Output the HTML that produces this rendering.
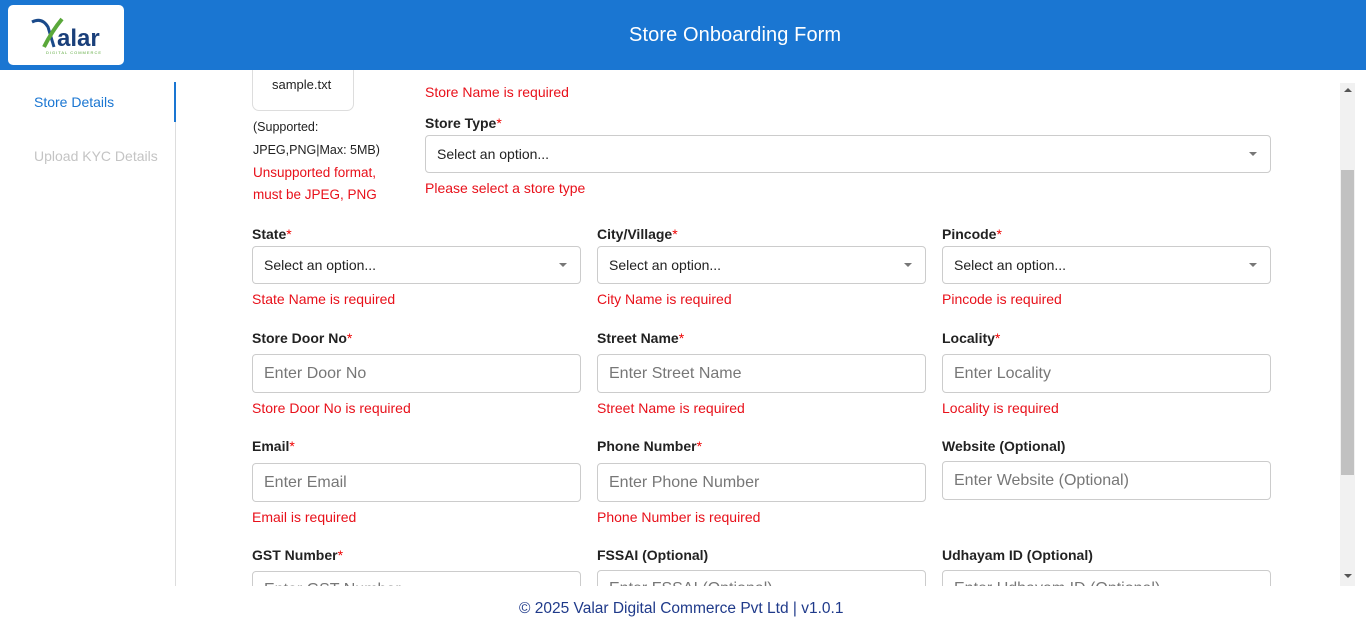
<!DOCTYPE html><html><head><style>
*{box-sizing:border-box;margin:0;padding:0}
body{width:1366px;height:633px;overflow:hidden;background:#fff;font-family:"Liberation Sans",Arial,sans-serif;position:relative}
.hdr{position:absolute;left:0;top:0;width:1366px;height:70px;background:#1a76d2}
.logo{position:absolute;left:8px;top:5px;width:116px;height:60px;background:#fff;border-radius:5px}
.title{position:absolute;left:629px;top:24px;color:#fff;font-size:20px;letter-spacing:0.1px}
.a{position:absolute;white-space:nowrap}
.lab{font-size:14px;font-weight:bold;color:#222}
.lab i{color:#e00;font-style:normal;font-weight:normal}
.err{font-size:14px;color:#e8101a}
.box{position:absolute;border:1px solid #ccc;border-radius:4px;background:#fff;font-size:16px;color:#777;padding-left:11px;display:flex;align-items:center}
.sel{font-size:14px;color:#222}
.sel:after{content:"";position:absolute;right:13px;top:50%;margin-top:-2px;border:4px solid transparent;border-top:4px solid #777}
.clip{position:absolute;left:0;top:70px;width:1340px;height:516px;overflow:hidden}
</style></head><body>
<div class="hdr"><div class="logo">
<svg width="116" height="60" viewBox="0 0 116 60"><path d="M24 17 Q34 12 40 22 L46 42" stroke="#1a4a8a" stroke-width="3" fill="none"/><path d="M36 42 Q44 26 54 14" stroke="#5aa83a" stroke-width="4" fill="none"/><text x="49" y="41" font-family="Liberation Sans" font-weight="bold" font-size="24" fill="#1a3f7a">alar</text><text x="38" y="49" font-family="Liberation Sans" font-size="4" fill="#5aa83a" letter-spacing="1">DIGITAL COMMERCE</text></svg>
</div><div class="title">Store Onboarding Form</div></div>
<div class="clip">
<div class="a" style="left:34px;top:24px;font-size:14px;color:#1a76d2">Store Details</div>
<div class="a" style="left:34px;top:78px;font-size:14px;color:#c4c4c4">Upload KYC Details</div>
<div class="a" style="left:175px;top:12px;width:1px;height:504px;background:#ddd"></div>
<div class="a" style="left:174px;top:12px;width:2px;height:40px;background:#1a76d2"></div>
<div class="a" style="left:252px;top:-20px;width:102px;height:61px;border:1px solid #ddd;border-radius:7px"></div>
<div class="a" style="left:272px;top:7px;font-size:13px;color:#222">sample.txt</div>
<div class="a" style="left:253px;top:46px;font-size:12.5px;color:#222;line-height:23px">(Supported:<br>JPEG,PNG|Max: 5MB)</div>
<div class="a err" style="left:253px;top:92px;font-size:13.5px;line-height:22px">Unsupported format,<br>must be JPEG, PNG</div>
<div class="a err" style="left:425px;top:14px">Store Name is required</div>
<div class="a lab" style="left:425px;top:45px">Store Type<i>*</i></div>
<div class="box sel" style="left:425px;top:65px;width:846px;height:38px">Select an option...</div>
<div class="a err" style="left:425px;top:110px">Please select a store type</div>
</div>
<div class="clip">
<div class="a lab" style="left:252px;top:156px">State<i>*</i></div>
<div class="a lab" style="left:597px;top:156px">City/Village<i>*</i></div>
<div class="a lab" style="left:942px;top:156px">Pincode<i>*</i></div>
<div class="box sel" style="left:252px;top:176px;width:329px;height:38px">Select an option...</div>
<div class="box sel" style="left:597px;top:176px;width:329px;height:38px">Select an option...</div>
<div class="box sel" style="left:942px;top:176px;width:329px;height:38px">Select an option...</div>
<div class="a err" style="left:252px;top:221px">State Name is required</div>
<div class="a err" style="left:597px;top:221px">City Name is required</div>
<div class="a err" style="left:942px;top:221px">Pincode is required</div>
<div class="a lab" style="left:252px;top:260px">Store Door No<i>*</i></div>
<div class="a lab" style="left:597px;top:260px">Street Name<i>*</i></div>
<div class="a lab" style="left:942px;top:260px">Locality<i>*</i></div>
<div class="box" style="left:252px;top:284px;width:329px;height:39px">Enter Door No</div>
<div class="box" style="left:597px;top:284px;width:329px;height:39px">Enter Street Name</div>
<div class="box" style="left:942px;top:284px;width:329px;height:39px">Enter Locality</div>
<div class="a err" style="left:252px;top:330px">Store Door No is required</div>
<div class="a err" style="left:597px;top:330px">Street Name is required</div>
<div class="a err" style="left:942px;top:330px">Locality is required</div>
<div class="a lab" style="left:252px;top:368px">Email<i>*</i></div>
<div class="a lab" style="left:597px;top:368px">Phone Number<i>*</i></div>
<div class="a lab" style="left:942px;top:368px">Website (Optional)</div>
<div class="box" style="left:252px;top:393px;width:329px;height:39px">Enter Email</div>
<div class="box" style="left:597px;top:393px;width:329px;height:39px">Enter Phone Number</div>
<div class="box" style="left:942px;top:391px;width:329px;height:39px">Enter Website (Optional)</div>
<div class="a err" style="left:252px;top:439px">Email is required</div>
<div class="a err" style="left:597px;top:439px">Phone Number is required</div>
<div class="a lab" style="left:252px;top:477px">GST Number<i>*</i></div>
<div class="a lab" style="left:597px;top:477px">FSSAI (Optional)</div>
<div class="a lab" style="left:942px;top:477px">Udhayam ID (Optional)</div>
<div class="box" style="left:252px;top:501px;width:329px;height:39px;align-items:flex-start;padding-top:9px">Enter GST Number</div>
<div class="box" style="left:597px;top:500px;width:329px;height:39px;align-items:flex-start;padding-top:9px">Enter FSSAI (Optional)</div>
<div class="box" style="left:942px;top:500px;width:329px;height:39px;align-items:flex-start;padding-top:9px">Enter Udhayam ID (Optional)</div>
</div>
<div class="a" style="left:1340px;top:83px;width:15px;height:503px;background:#f1f1f1"></div>
<div class="a" style="left:1341px;top:170px;width:13px;height:305px;background:#c1c1c1"></div>
<div class="a" style="left:1344px;top:88px;border:4px solid transparent;border-bottom:4px solid #555;border-top:0"></div>
<div class="a" style="left:1344px;top:574px;border:4px solid transparent;border-top:4px solid #555;border-bottom:0"></div>
<div class="a" style="left:519px;top:600px;font-size:15.5px;color:#1f3a8a">© 2025 Valar Digital Commerce Pvt Ltd | v1.0.1</div>
</body></html>
